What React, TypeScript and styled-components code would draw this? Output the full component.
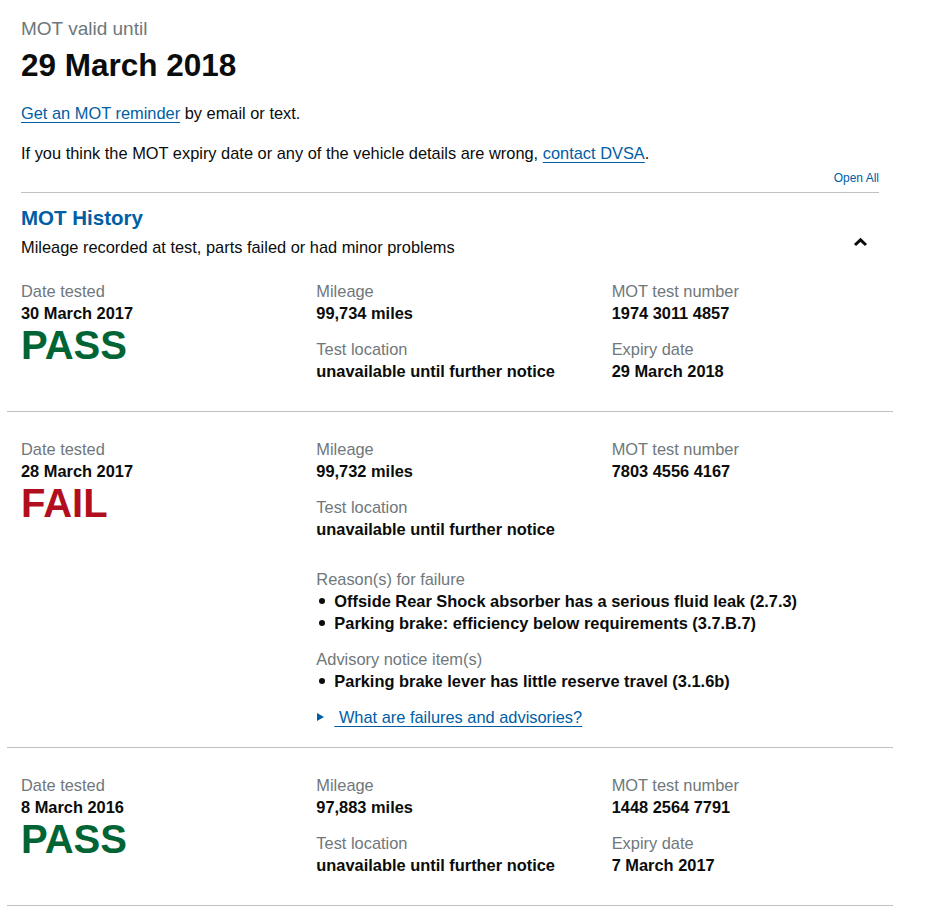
import * as React from 'react';
import styled, { createGlobalStyle } from 'styled-components';

type TestResult = {
  date: string;
  result: 'PASS' | 'FAIL';
  mileage: string;
  location: string;
  testNumber: string;
  expiry?: string;
  failures?: string[];
  advisories?: string[];
};

const tests: TestResult[] = [
  {
    date: '30 March 2017',
    result: 'PASS',
    mileage: '99,734 miles',
    location: 'unavailable until further notice',
    testNumber: '1974 3011 4857',
    expiry: '29 March 2018',
  },
  {
    date: '28 March 2017',
    result: 'FAIL',
    mileage: '99,732 miles',
    location: 'unavailable until further notice',
    testNumber: '7803 4556 4167',
    failures: [
      'Offside Rear Shock absorber has a serious fluid leak (2.7.3)',
      'Parking brake: efficiency below requirements (3.7.B.7)',
    ],
    advisories: ['Parking brake lever has little reserve travel (3.1.6b)'],
  },
  {
    date: '8 March 2016',
    result: 'PASS',
    mileage: '97,883 miles',
    location: 'unavailable until further notice',
    testNumber: '1448 2564 7791',
    expiry: '7 March 2017',
  },
];

function App() {
  return (
    <>
      <GlobalStyle />
      <Page>
        <Intro>
          <Caption>MOT valid until</Caption>
          <ExpiryHeading>29 March 2018</ExpiryHeading>
          <Para>
            <Link href="#">Get an MOT reminder</Link> by email or text.
          </Para>
          <Para>
            If you think the MOT expiry date or any of the vehicle details are
            wrong, <Link href="#">contact DVSA</Link>.
          </Para>
          <OpenAllRow>
            <OpenAll href="#">Open All</OpenAll>
          </OpenAllRow>
        </Intro>

        <Accordion>
          <SectionHeader>
            <div>
              <SectionTitle>MOT History</SectionTitle>
              <SectionSummary>
                Mileage recorded at test, parts failed or had minor problems
              </SectionSummary>
            </div>
            <ToggleButton aria-label="Collapse">
              <svg width="15" height="10" viewBox="0 0 15 10">
                <polyline
                  points="2,8 7.5,2.8 13,8"
                  fill="none"
                  stroke="#0b0c0c"
                  strokeWidth="3"
                />
              </svg>
            </ToggleButton>
          </SectionHeader>

          {tests.map((t) => (
            <TestRow key={t.testNumber}>
              <Column>
                <Label>Date tested</Label>
                <Value>{t.date}</Value>
                <Result $fail={t.result === 'FAIL'}>{t.result}</Result>
              </Column>
              <Column>
                <Field>
                  <Label>Mileage</Label>
                  <Value>{t.mileage}</Value>
                </Field>
                <Field>
                  <Label>Test location</Label>
                  <Value>{t.location}</Value>
                </Field>
              </Column>
              <Column>
                <Field>
                  <Label>MOT test number</Label>
                  <Value>{t.testNumber}</Value>
                </Field>
                {t.expiry && (
                  <Field>
                    <Label>Expiry date</Label>
                    <Value>{t.expiry}</Value>
                  </Field>
                )}
              </Column>
              {t.failures && (
                <Defects>
                  <Field>
                    <Label>Reason(s) for failure</Label>
                    <BulletList>
                      {t.failures.map((f) => (
                        <li key={f}>{f}</li>
                      ))}
                    </BulletList>
                  </Field>
                  {t.advisories && (
                    <Field>
                      <Label>Advisory notice item(s)</Label>
                      <BulletList>
                        {t.advisories.map((a) => (
                          <li key={a}>{a}</li>
                        ))}
                      </BulletList>
                    </Field>
                  )}
                  <Details>
                    <Arrow />
                    <Link href="#"> What are failures and advisories?</Link>
                  </Details>
                </Defects>
              )}
            </TestRow>
          ))}
        </Accordion>
      </Page>
    </>
  );
}

const GlobalStyle = createGlobalStyle`
  body {
    margin: 0;
    background: #ffffff;
    color: #0b0c0c;
    font-family: "Liberation Sans", Arial, sans-serif;
  }
`;

const Page = styled.div`
  width: 886px;
  padding: 16px 0 0 7px;
`;

const Intro = styled.div`
  padding: 0 14px;
`;

const Caption = styled.div`
  font-size: 19px;
  line-height: 25px;
  color: #6f777b;
`;

const ExpiryHeading = styled.h1`
  margin: 4px 0 0;
  font-size: 31.5px;
  line-height: 40px;
  font-weight: 700;
`;

const Para = styled.p`
  margin: 16px 0 0;
  font-size: 16.4px;
  line-height: 24px;
`;

const Link = styled.a`
  color: #005ea5;
  text-decoration: underline;
  text-underline-offset: 3px;
  text-decoration-thickness: 1px;
  white-space: pre;
`;

const OpenAllRow = styled.div`
  display: flex;
  justify-content: flex-end;
  margin-top: 5px;
  padding-bottom: 6px;
  border-bottom: 1px solid #bfc1c3;
`;

const OpenAll = styled.a`
  font-size: 12px;
  line-height: 16px;
  color: #005ea5;
  text-decoration: none;
`;

const Accordion = styled.section``;

const SectionHeader = styled.div`
  display: flex;
  justify-content: space-between;
  align-items: center;
  padding: 12px 14px 0;
`;

const SectionTitle = styled.h2`
  margin: 0;
  font-size: 20.5px;
  line-height: 26px;
  font-weight: 700;
  color: #005ea5;
`;

const SectionSummary = styled.div`
  margin-top: 5px;
  font-size: 16.4px;
  line-height: 22px;
`;

const ToggleButton = styled.button`
  display: flex;
  align-items: center;
  justify-content: center;
  margin: 20px 11px 0 0;
  padding: 0;
  border: 0;
  background: none;
  cursor: pointer;
`;

const TestRow = styled.div`
  display: grid;
  grid-template-columns: repeat(3, 1fr);
  padding: 26px 0 29px;
  border-bottom: 1px solid #bfc1c3;

  &:nth-child(2) {
    padding-top: 22px;
  }
`;

const Column = styled.div`
  padding: 0 14px;
`;

const Field = styled.div`
  & + & {
    margin-top: 14px;
  }
`;

const Label = styled.div`
  font-size: 16.4px;
  line-height: 22px;
  color: #6f777b;
`;

const Value = styled.div`
  font-size: 16.4px;
  line-height: 22px;
  font-weight: 700;
`;

const Result = styled.div<{ $fail?: boolean }>`
  font-size: 40px;
  line-height: 42px;
  font-weight: 700;
  color: ${(p) => (p.$fail ? '#b10e1e' : '#006435')};
`;

const Defects = styled.div`
  grid-column: 2 / 4;
  padding: 0 14px;
  margin-top: 28px;
  margin-bottom: -10px;
`;

const BulletList = styled.ul`
  margin: 0;
  padding: 0 0 0 18px;
  list-style: none;

  li {
    position: relative;
    font-size: 16.4px;
    line-height: 22px;
    font-weight: 700;
  }

  li::before {
    content: '';
    position: absolute;
    left: -15px;
    top: 8px;
    width: 6px;
    height: 6px;
    border-radius: 50%;
    background: #0b0c0c;
  }
`;

const Details = styled.div`
  display: flex;
  align-items: center;
  margin-top: 14px;
  font-size: 16.4px;
  line-height: 22px;
`;

const Arrow = styled.span`
  width: 0;
  height: 0;
  margin: 0 10px 0 1px;
  border-top: 4px solid transparent;
  border-bottom: 4px solid transparent;
  border-left: 7px solid #005ea5;
`;

export default App;
